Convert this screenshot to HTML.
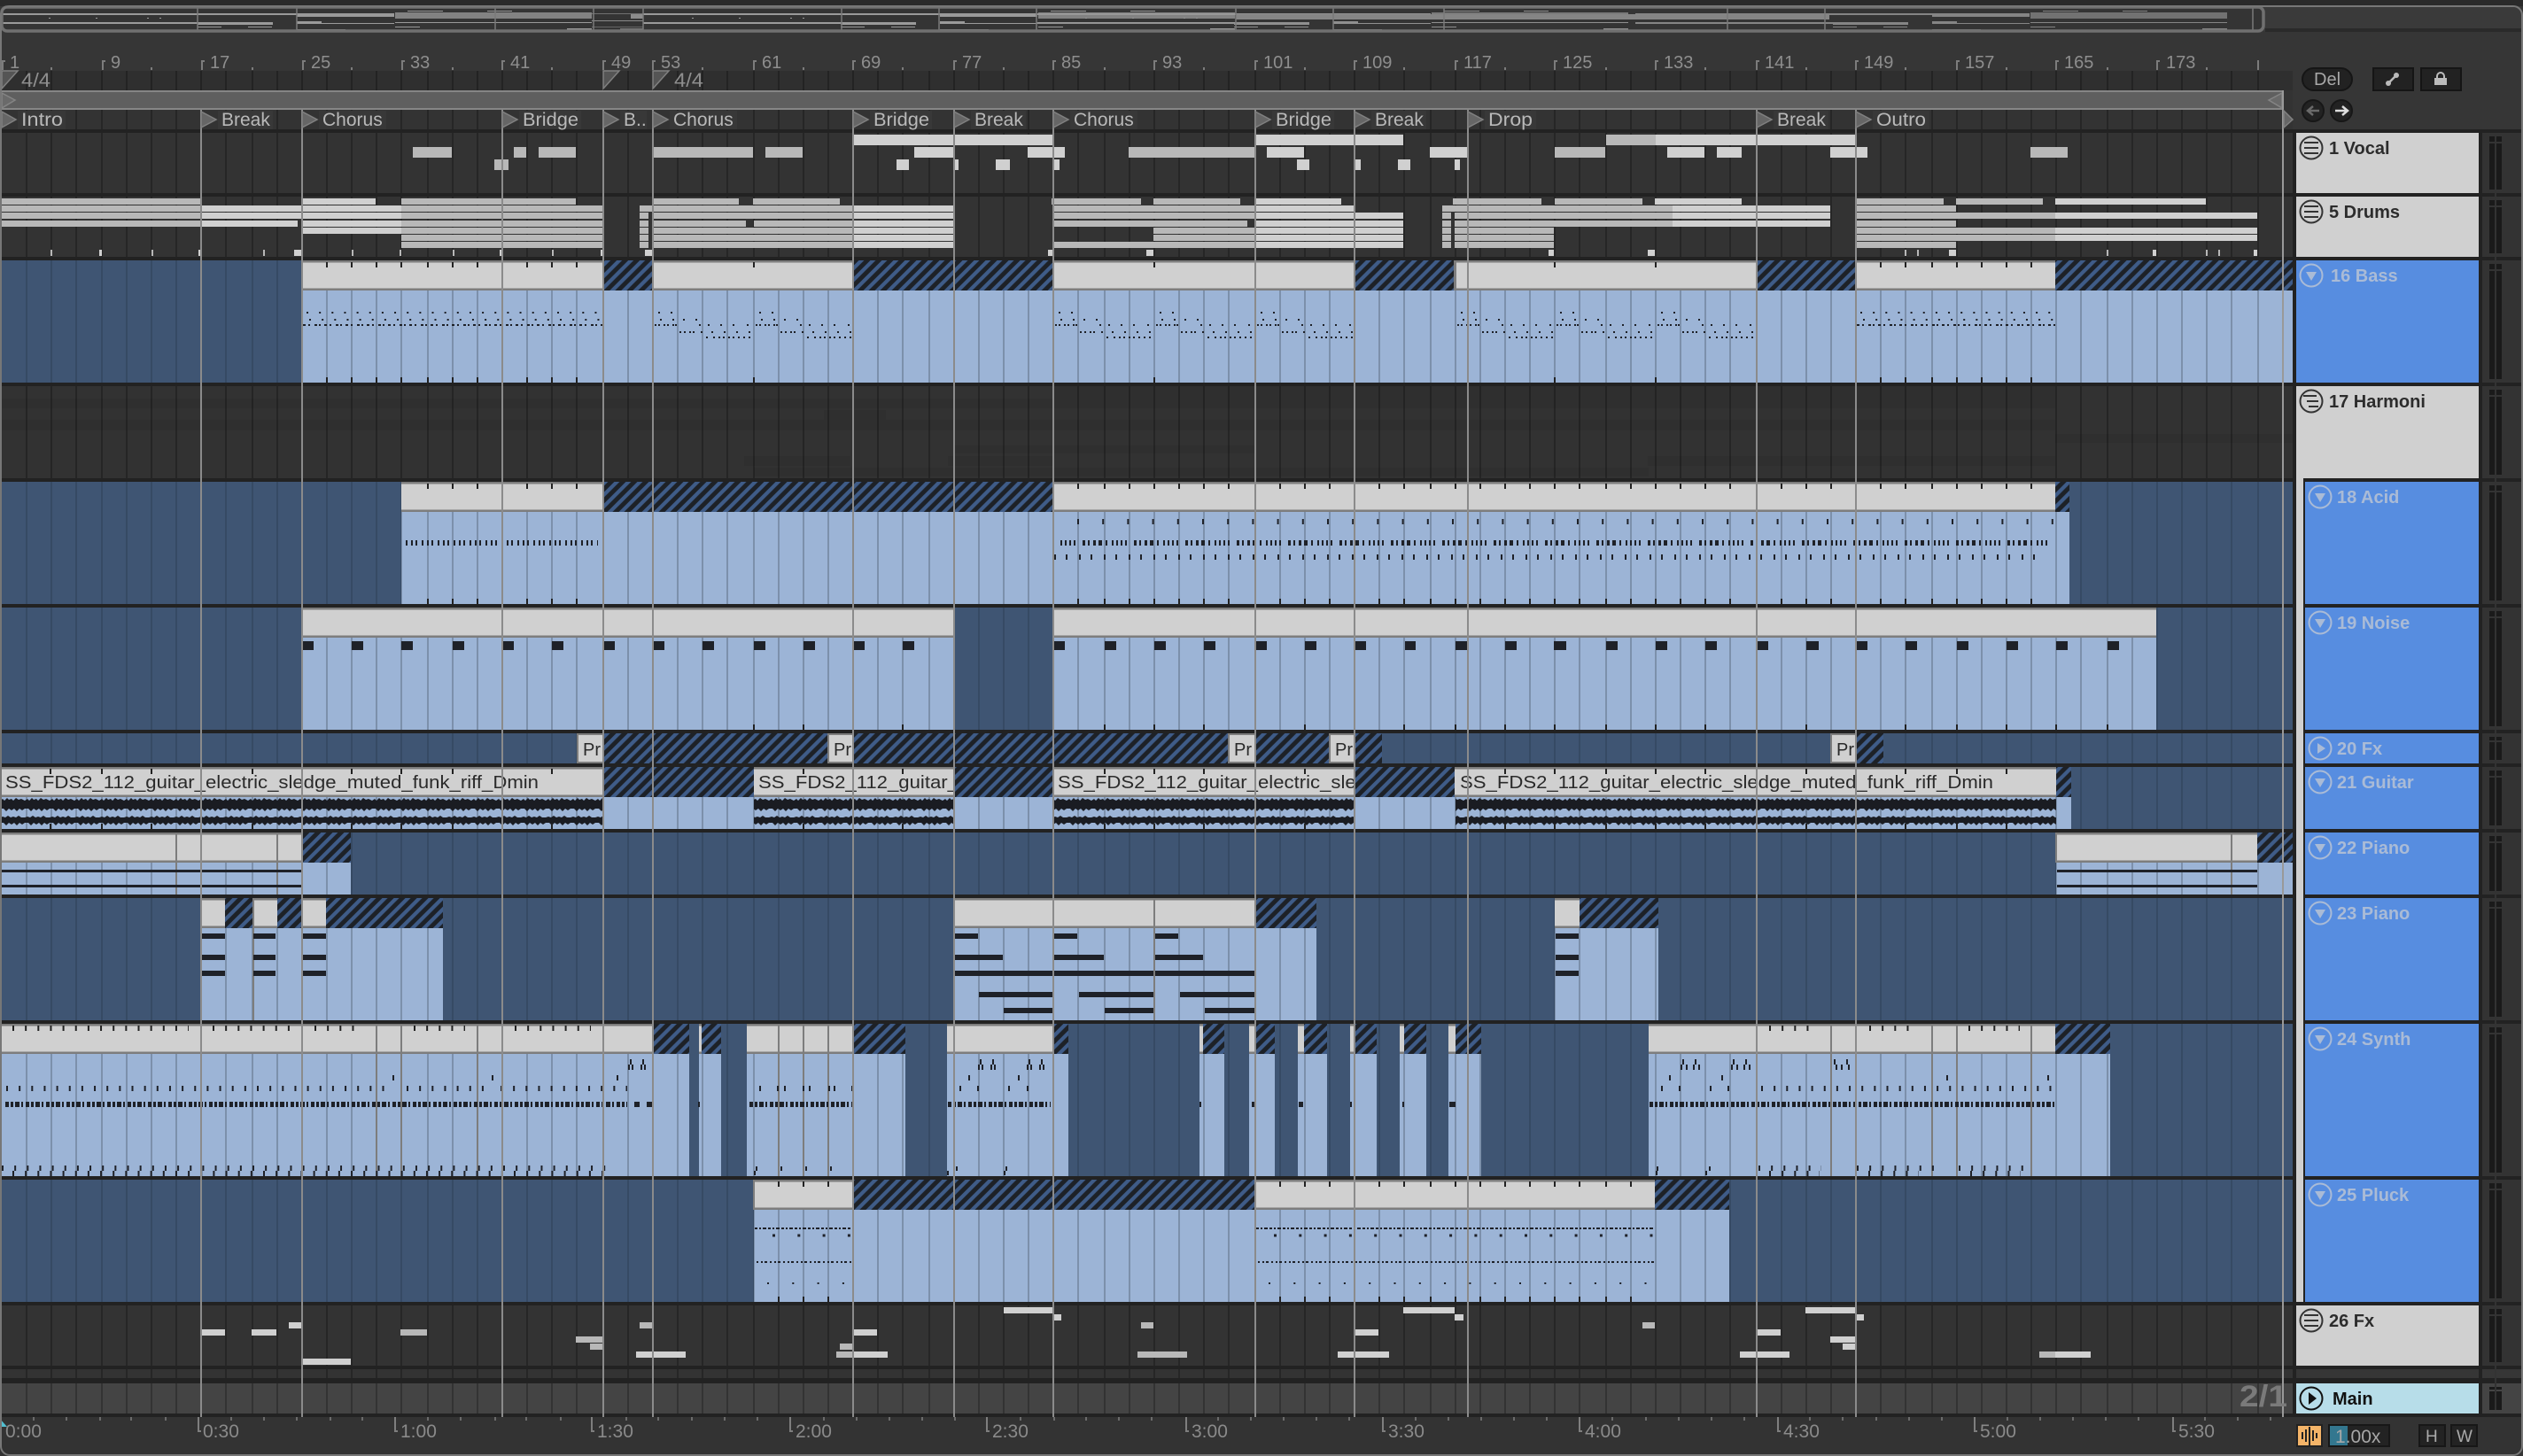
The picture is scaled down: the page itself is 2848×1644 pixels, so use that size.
<!DOCTYPE html>
<html><head><meta charset="utf-8"><title>Arrangement</title>
<style>
html,body{margin:0;padding:0;background:#363636;width:2848px;height:1644px;overflow:hidden}
svg{display:block}
text{font-family:"Liberation Sans",sans-serif}
.r{font-size:20px;fill:#8e8e8e}
.t{font-size:21px;fill:#8a8a8a}
.lo{font-size:21px;fill:#b9b9b9}
.c{font-size:20px;fill:#2a2a2a}
.hd{font-size:20px;font-weight:bold;fill:#2c2c2c}
.hb{font-size:20px;font-weight:bold;fill:#aabbd6}
.d{fill:#3f5573}.b{fill:#9cb4d6}.l{fill:url(#cl)}.h{fill:url(#ht)}
.s{fill:#222}
.v1{fill:#d0d0d0}.v2{fill:#b8b8b8}
.dr rect{height:7px}
.n{fill:#1e2128}
.ln{stroke:#1e2128;fill:none}
</style></head><body>
<svg xmlns="http://www.w3.org/2000/svg" width="2848" height="1644" viewBox="0 0 2848 1644">
<defs>
<linearGradient id="cl" x1="0" y1="0" x2="0" y2="1">
<stop offset="0" stop-color="#7d7d7d"/><stop offset=".07" stop-color="#7d7d7d"/><stop offset=".07" stop-color="#d0d0d0"/><stop offset=".92" stop-color="#d0d0d0"/><stop offset=".92" stop-color="#7d7d7d"/><stop offset="1" stop-color="#7d7d7d"/>
</linearGradient>
<pattern id="ht" patternUnits="userSpaceOnUse" width="9.2" height="9.2" patternTransform="rotate(45)">
<rect width="9.2" height="9.2" fill="#1d2127"/><rect x="1" width="4.2" height="9.2" fill="#3f5c88"/>
</pattern>
<pattern id="w1" patternUnits="userSpaceOnUse" x="0" y="901" width="28" height="15">
<path fill="#1a1c22" d="M0 3L3 1 5 3 8 0 10 2 13 1 15 3 18 0 21 2 24 1 28 3V12L25 14 22 12 19 15 16 12 13 14 10 12 7 15 4 12 0 12Z"/>
</pattern>
<pattern id="w2" patternUnits="userSpaceOnUse" x="0" y="921" width="28" height="11">
<path fill="#1a1c22" d="M0 2L3 1 6 2 9 0 12 2 15 1 18 2 21 0 24 2 28 2V8L25 10 22 8 19 11 16 8 13 10 10 8 7 11 4 8 0 8Z"/>
</pattern>
<path id="grid" d="M30 80V1596M58 80V1596M86 80V1596M115 80V1596M143 80V1596M171 80V1596M199 80V1596M227 80V1596M255 80V1596M285 80V1596M313 80V1596M341 80V1596M369 80V1596M397 80V1596M425 80V1596M453 80V1596M483 80V1596M511 80V1596M539 80V1596M567 80V1596M595 80V1596M623 80V1596M651 80V1596M681 80V1596M709 80V1596M737 80V1596M765 80V1596M793 80V1596M821 80V1596M851 80V1596M879 80V1596M907 80V1596M935 80V1596M963 80V1596M991 80V1596M1019 80V1596M1049 80V1596M1077 80V1596M1105 80V1596M1133 80V1596M1161 80V1596M1189 80V1596M1217 80V1596M1247 80V1596M1275 80V1596M1303 80V1596M1331 80V1596M1359 80V1596M1387 80V1596M1417 80V1596M1445 80V1596M1473 80V1596M1501 80V1596M1529 80V1596M1557 80V1596M1585 80V1596M1615 80V1596M1643 80V1596M1671 80V1596M1699 80V1596M1727 80V1596M1755 80V1596M1783 80V1596M1813 80V1596M1841 80V1596M1869 80V1596M1897 80V1596M1925 80V1596M1953 80V1596M1983 80V1596M2011 80V1596M2039 80V1596M2067 80V1596M2095 80V1596M2123 80V1596M2151 80V1596M2181 80V1596M2209 80V1596M2237 80V1596M2265 80V1596M2293 80V1596M2321 80V1596M2349 80V1596M2379 80V1596M2407 80V1596M2435 80V1596M2463 80V1596M2491 80V1596M2519 80V1596M2549 80V1596"/>
<clipPath id="bc">
<rect x="341" y="328" width="2247" height="104"/>
<rect x="453" y="578" width="1883" height="104"/>
<rect x="341" y="720" width="736" height="104"/><rect x="1189" y="720" width="1245" height="104"/>
<rect x="0" y="899" width="2338" height="37"/>
<rect x="0" y="973" width="396" height="37"/><rect x="2321" y="973" width="267" height="37"/>
<rect x="227" y="1048" width="273" height="104"/><rect x="1077" y="1048" width="409" height="104"/><rect x="1755" y="1048" width="117" height="104"/>
<rect x="0" y="1189" width="778" height="139"/><rect x="789" y="1189" width="25" height="139"/><rect x="843" y="1189" width="179" height="139"/><rect x="1069" y="1189" width="137" height="139"/><rect x="1354" y="1189" width="28" height="139"/><rect x="1410" y="1189" width="29" height="139"/><rect x="1465" y="1189" width="33" height="139"/><rect x="1524" y="1189" width="30" height="139"/><rect x="1580" y="1189" width="30" height="139"/><rect x="1635" y="1189" width="37" height="139"/><rect x="1861" y="1189" width="521" height="139"/>
<rect x="851" y="1366" width="1101" height="104"/>
</clipPath>
<clipPath id="dk"><rect x="0" y="80" width="2588" height="214"/><rect x="0" y="436" width="2588" height="108"/><rect x="0" y="1470" width="2588" height="130"/></clipPath>
<clipPath id="tk">
<rect x="360" y="296" width="300" height="6"/><rect x="360" y="426" width="300" height="6"/>
<rect x="850" y="296" width="2" height="6"/><rect x="850" y="426" width="2" height="6"/>
<rect x="1302" y="296" width="2" height="6"/><rect x="1302" y="426" width="2" height="6"/>
<rect x="1754" y="296" width="2" height="6"/><rect x="1754" y="426" width="2" height="6"/>
<rect x="1868" y="296" width="2" height="6"/><rect x="1868" y="426" width="2" height="6"/>
<rect x="2110" y="296" width="190" height="6"/><rect x="2110" y="426" width="190" height="6"/>
<rect x="470" y="546" width="200" height="6"/><rect x="470" y="676" width="200" height="6"/>
<rect x="1200" y="546" width="1110" height="6"/><rect x="1200" y="676" width="1110" height="6"/>
<rect x="870" y="1334" width="80" height="6"/><rect x="870" y="1464" width="80" height="6"/>
<rect x="1430" y="1334" width="420" height="6"/><rect x="1430" y="1464" width="420" height="6"/>
</clipPath>
<g id="bA" fill="#1e2128"><path d="M6 352h2v2h-2zM20 352h2v2h-2zM8 360h2v2h-2zM22 360h2v2h-2zM34 360h2v2h-2zM48 360h2v2h-2zM2 366h2v2h-2zM6 366h2v2h-2zM12 366h2v2h-2zM16 366h2v2h-2zM22 366h2v2h-2zM25 366h2v2h-2zM52 366h2v2h-2zM62 366h2v2h-2zM76 366h2v2h-2zM90 366h2v2h-2zM106 366h2v2h-2zM30 374h2v2h-2zM35 374h2v2h-2zM41 374h2v2h-2zM45 374h2v2h-2zM54 374h2v2h-2zM66 374h2v2h-2zM80 374h2v2h-2zM94 374h2v2h-2zM108 374h2v2h-2zM60 380h2v2h-2zM68 380h2v2h-2zM74 380h2v2h-2zM79 380h2v2h-2zM85 380h2v2h-2zM90 380h2v2h-2zM96 380h2v2h-2zM102 380h2v2h-2zM108 380h2v2h-2z"/></g>
<g id="ov" fill="#9a9a9a">
<rect x="0" y="15" width="223" height="2"/><rect x="0" y="25" width="223" height="2"/><rect x="55" y="20" width="2" height="1"/><rect x="108" y="20" width="2" height="1"/><rect x="166" y="20" width="2" height="1"/><rect x="180" y="20" width="2" height="1"/>
<rect x="223" y="15" width="112" height="2"/><rect x="223" y="25" width="85" height="3"/><rect x="223" y="30" width="27" height="1"/><rect x="280" y="30" width="27" height="1"/>
<rect x="335" y="15" width="110" height="4"/><rect x="335" y="24" width="28" height="3"/><rect x="335" y="33" width="55" height="1"/><rect x="335" y="26" width="110" height="1"/>
<rect x="446" y="14" width="222" height="7" fill="#828282"/><rect x="446" y="25" width="222" height="1"/><rect x="446" y="30" width="28" height="1"/><rect x="640" y="32" width="28" height="2"/><rect x="550" y="12" width="28" height="1"/><rect x="460" y="12" width="40" height="1"/>
</g>
</defs>

<rect width="2848" height="1644" fill="#363636"/>
<rect width="2848" height="7" fill="#2a2a2a"/>
<!-- overview -->
<rect x="2" y="8" width="2844" height="27" fill="#3a3a3a"/>
<rect x="2" y="8" width="2553" height="27" rx="6" fill="#343434"/>
<use href="#ov"/><use href="#ov" x="726"/><use href="#ov" x="1170" opacity=".9"/><use href="#ov" x="1846" opacity=".8"/>
<rect x="668" y="23" width="58" height="1" fill="#8a8a8a"/><rect x="668" y="15" width="58" height="1" fill="#707070"/><rect x="668" y="30" width="58" height="1" fill="#666"/><rect x="712" y="16" width="14" height="5" fill="#8c8c8c"/><rect x="700" y="32" width="26" height="2" fill="#777"/>
<rect x="1395" y="16" width="670" height="6" fill="#858585"/>
<path stroke="#7a7a7a" stroke-width="1.5" d="M223 9V34M335 9V34M559 9V34M670 9V34M726 9V34M950 9V34M1060 9V34M1170 9V34M1395 9V34M1505 9V34M1630 9V34M1950 9V34M2060 9V34M2543 9V34"/>
<rect x="2" y="8" width="2553" height="27" rx="6" fill="none" stroke="#707070" stroke-width="3.5"/>
<rect x="2557" y="32" width="289" height="4" fill="#2a2a2a"/>

<!-- arrangement base -->
<rect x="0" y="80" width="2588" height="22" fill="#2f2f2f"/>
<rect x="0" y="102" width="2588" height="1494" fill="#333"/>
<rect x="0" y="1562" width="2588" height="34" fill="#444"/>
<rect x="0" y="436" width="2588" height="104" fill="#323232"/>
<!-- harmoni shading -->
<g fill="#000" opacity=".05"><rect x="1189" y="436" width="1131" height="14"/><rect x="0" y="450" width="2320" height="11"/><rect x="930" y="463" width="70" height="11"/><rect x="0" y="474" width="2320" height="12"/><rect x="1077" y="503" width="340" height="9"/><rect x="2320" y="490" width="268" height="10"/><rect x="840" y="515" width="120" height="11"/><rect x="1070" y="515" width="120" height="11"/><rect x="1860" y="515" width="460" height="11"/><rect x="851" y="528" width="1010" height="10"/></g>

<!-- deep blue rows -->
<g class="d"><rect x="0" y="294" width="2588" height="138"/><rect x="0" y="544" width="2588" height="138"/><rect x="0" y="686" width="2588" height="138"/><rect x="0" y="828" width="2588" height="34"/><rect x="0" y="866" width="2588" height="70"/><rect x="0" y="940" width="2588" height="70"/><rect x="0" y="1014" width="2588" height="138"/><rect x="0" y="1156" width="2588" height="172"/><rect x="0" y="1332" width="2588" height="138"/></g>

<!-- grid base (faint on deep blue) -->
<use href="#grid" stroke="#000" stroke-opacity=".13" stroke-width="2"/>
<g clip-path="url(#dk)"><use href="#grid" stroke="#000" stroke-opacity=".12" stroke-width="2"/></g>

<!-- clip bodies -->
<g class="b">
<rect x="341" y="328" width="2247" height="104"/>
<rect x="453" y="578" width="1883" height="104"/>
<rect x="341" y="720" width="736" height="104"/><rect x="1189" y="720" width="1245" height="104"/>
<rect x="0" y="899" width="2338" height="37"/>
<rect x="0" y="973" width="396" height="37"/><rect x="2321" y="973" width="267" height="37"/>
<rect x="227" y="1048" width="273" height="104"/><rect x="1077" y="1048" width="409" height="104"/><rect x="1755" y="1048" width="117" height="104"/>
<rect x="0" y="1189" width="778" height="139"/><rect x="789" y="1189" width="25" height="139"/><rect x="843" y="1189" width="179" height="139"/><rect x="1069" y="1189" width="137" height="139"/><rect x="1354" y="1189" width="28" height="139"/><rect x="1410" y="1189" width="29" height="139"/><rect x="1465" y="1189" width="33" height="139"/><rect x="1524" y="1189" width="30" height="139"/><rect x="1580" y="1189" width="30" height="139"/><rect x="1635" y="1189" width="37" height="139"/><rect x="1861" y="1189" width="521" height="139"/>
<rect x="851" y="1366" width="1101" height="104"/>
</g>
<!-- grid on clip bodies -->
<g clip-path="url(#bc)"><use href="#grid" stroke="#000" stroke-opacity=".2" stroke-width="2"/></g>

<!-- separators -->
<g class="s"><rect y="146" width="2846" height="4"/><rect y="218" width="2846" height="4"/><rect y="290" width="2846" height="4"/><rect y="432" width="2846" height="4"/><rect y="540" width="2846" height="4"/><rect y="682" width="2846" height="4"/><rect y="824" width="2846" height="4"/><rect y="862" width="2846" height="4"/><rect y="936" width="2846" height="4"/><rect y="1010" width="2846" height="4"/><rect y="1152" width="2846" height="4"/><rect y="1328" width="2846" height="4"/><rect y="1470" width="2846" height="4"/><rect y="1542" width="2846" height="4"/><rect y="1556" width="2846" height="6"/><rect y="1596" width="2846" height="4"/></g>

<!-- vocal notes -->
<g class="v1"><rect x="963" y="152" width="226" height="12"/><rect x="1418" y="152" width="166" height="12"/><rect x="1869" y="152" width="226" height="12"/>
<rect x="1032" y="166" width="45" height="12"/><rect x="1160" y="166" width="42" height="12"/><rect x="1430" y="166" width="42" height="12"/><rect x="1614" y="166" width="42" height="12"/><rect x="1882" y="166" width="42" height="12"/><rect x="1938" y="166" width="28" height="12"/><rect x="2066" y="166" width="42" height="12"/>
<rect x="1012" y="180" width="14" height="12"/><rect x="1078" y="180" width="4" height="12"/><rect x="1124" y="180" width="16" height="12"/><rect x="1190" y="180" width="6" height="12"/><rect x="1464" y="180" width="14" height="12"/><rect x="1530" y="180" width="6" height="12"/><rect x="1578" y="180" width="14" height="12"/><rect x="1642" y="180" width="6" height="12"/></g>
<g class="v2"><rect x="1813" y="152" width="56" height="12"/>
<rect x="466" y="166" width="44" height="12"/><rect x="580" y="166" width="14" height="12"/><rect x="608" y="166" width="42" height="12"/><rect x="737" y="166" width="113" height="12"/><rect x="864" y="166" width="42" height="12"/><rect x="1274" y="166" width="142" height="12"/><rect x="1755" y="166" width="57" height="12"/><rect x="2292" y="166" width="42" height="12"/>
<rect x="558" y="180" width="16" height="12"/></g>

<!-- drums -->
<g class="v2 dr">
<rect x="2" y="224" width="225" height="6"/><rect x="453" y="224" width="197" height="6"/><rect x="737" y="224" width="97" height="6"/><rect x="850" y="224" width="98" height="6"/><rect x="1187" y="224" width="101" height="6"/><rect x="1302" y="224" width="98" height="6"/><rect x="1640" y="224" width="100" height="6"/><rect x="1755" y="224" width="99" height="6"/><rect x="2095" y="224" width="99" height="6"/><rect x="2208" y="224" width="98" height="6"/>
<rect x="2" y="232" width="225" height="6"/><rect x="453" y="232" width="228" height="6"/><rect x="722" y="232" width="241" height="6"/><rect x="1189" y="232" width="228" height="6"/><rect x="1628" y="232" width="260" height="6"/><rect x="2095" y="232" width="113" height="6"/>
<rect x="2" y="240" width="225" height="6"/><rect x="453" y="240" width="228" height="6"/><rect x="737" y="240" width="226" height="6"/><rect x="1189" y="240" width="228" height="6"/><rect x="1642" y="240" width="246" height="6"/><rect x="2095" y="240" width="225" height="6"/>
<rect x="2" y="249" width="225" height="6"/><rect x="453" y="249" width="228" height="6"/><rect x="737" y="249" width="105" height="6"/><rect x="851" y="249" width="112" height="6"/><rect x="1189" y="249" width="219" height="6"/><rect x="1642" y="249" width="246" height="6"/><rect x="2095" y="249" width="113" height="6"/>
<rect x="453" y="257" width="228" height="6"/><rect x="737" y="257" width="226" height="6"/><rect x="1302" y="257" width="115" height="6"/><rect x="1642" y="257" width="112" height="6"/><rect x="2095" y="257" width="225" height="6"/>
<rect x="453" y="265" width="228" height="6"/><rect x="737" y="265" width="226" height="6"/><rect x="1302" y="265" width="115" height="6"/><rect x="1642" y="265" width="112" height="6"/><rect x="2095" y="265" width="225" height="6"/>
<rect x="453" y="273" width="228" height="6"/><rect x="737" y="273" width="226" height="6"/><rect x="1189" y="273" width="228" height="6"/><rect x="1642" y="273" width="112" height="6"/><rect x="2095" y="273" width="113" height="6"/>
<rect x="722" y="240" width="10" height="6"/><rect x="722" y="249" width="10" height="6"/><rect x="722" y="257" width="10" height="6"/><rect x="722" y="265" width="10" height="6"/><rect x="722" y="273" width="10" height="6"/>
<rect x="1628" y="240" width="10" height="6"/><rect x="1628" y="249" width="10" height="6"/><rect x="1628" y="257" width="10" height="6"/><rect x="1628" y="265" width="10" height="6"/><rect x="1628" y="273" width="10" height="6"/>
<rect x="57" y="282" width="2" height="6"/><rect x="171" y="282" width="2" height="6"/><rect x="297" y="282" width="2" height="6"/><rect x="397" y="282" width="2" height="6"/><rect x="451" y="282" width="2" height="6"/><rect x="511" y="282" width="2" height="6"/><rect x="623" y="282" width="2" height="6"/><rect x="2150" y="282" width="2" height="6"/><rect x="2164" y="282" width="2" height="6"/><rect x="2378" y="282" width="2" height="6"/><rect x="2490" y="282" width="2" height="6"/><rect x="2504" y="282" width="2" height="6"/>
</g>
<g class="v1 dr">
<rect x="341" y="224" width="83" height="6"/><rect x="1418" y="224" width="96" height="6"/><rect x="1868" y="224" width="98" height="6"/><rect x="2320" y="224" width="170" height="6"/>
<rect x="227" y="232" width="226" height="6"/><rect x="963" y="232" width="113" height="6"/><rect x="1417" y="232" width="111" height="6"/><rect x="1888" y="232" width="178" height="6"/>
<rect x="227" y="240" width="226" height="6"/><rect x="963" y="240" width="113" height="6"/><rect x="1417" y="240" width="167" height="6"/><rect x="1888" y="240" width="178" height="6"/><rect x="2320" y="240" width="228" height="6"/>
<rect x="227" y="249" width="109" height="6"/><rect x="341" y="249" width="112" height="6"/><rect x="963" y="249" width="113" height="6"/><rect x="1417" y="249" width="167" height="6"/><rect x="1888" y="249" width="178" height="6"/>
<rect x="341" y="257" width="112" height="6"/><rect x="963" y="257" width="113" height="6"/><rect x="1417" y="257" width="167" height="6"/><rect x="2320" y="257" width="228" height="6"/>
<rect x="963" y="265" width="113" height="6"/><rect x="1417" y="265" width="167" height="6"/><rect x="2320" y="265" width="228" height="6"/>
<rect x="963" y="273" width="113" height="6"/><rect x="1417" y="273" width="167" height="6"/>
<rect x="112" y="282" width="3" height="6"/><rect x="224" y="282" width="4" height="6"/><rect x="332" y="282" width="8" height="6"/><rect x="564" y="282" width="4" height="6"/><rect x="678" y="282" width="4" height="6"/><rect x="728" y="282" width="9" height="6"/><rect x="1183" y="282" width="5" height="6"/><rect x="1294" y="282" width="8" height="6"/><rect x="1748" y="282" width="6" height="6"/><rect x="1860" y="282" width="8" height="6"/><rect x="2200" y="282" width="8" height="6"/><rect x="2430" y="282" width="4" height="6"/><rect x="2544" y="282" width="4" height="6"/>
</g>

<!-- clip headers -->
<g class="l">
<rect x="341" y="294" width="340" height="34"/><rect x="737" y="294" width="226" height="34"/><rect x="1189" y="294" width="340" height="34"/><rect x="1642" y="294" width="341" height="34"/><rect x="2095" y="294" width="225" height="34"/>
<rect x="453" y="544" width="228" height="34"/><rect x="1189" y="544" width="1131" height="34"/>
<rect x="341" y="686" width="736" height="34"/><rect x="1189" y="686" width="1245" height="34"/>
<rect x="0" y="866" width="681" height="34"/><rect x="851" y="866" width="226" height="34"/><rect x="1189" y="866" width="340" height="34"/><rect x="1642" y="866" width="679" height="34"/>
<rect x="0" y="940" width="341" height="34"/><rect x="2321" y="940" width="227" height="34"/>
<rect x="227" y="1014" width="27" height="34"/><rect x="286" y="1014" width="27" height="34"/><rect x="341" y="1014" width="27" height="34"/><rect x="1077" y="1014" width="340" height="34"/><rect x="1755" y="1014" width="28" height="34"/>
<rect x="0" y="1156" width="737" height="34"/><rect x="789" y="1156" width="3" height="34"/><rect x="843" y="1156" width="120" height="34"/><rect x="1069" y="1156" width="120" height="34"/><rect x="1354" y="1156" width="4" height="34"/><rect x="1410" y="1156" width="7" height="34"/><rect x="1465" y="1156" width="7" height="34"/><rect x="1524" y="1156" width="5" height="34"/><rect x="1580" y="1156" width="5" height="34"/><rect x="1635" y="1156" width="8" height="34"/><rect x="1861" y="1156" width="459" height="34"/>
<rect x="851" y="1332" width="112" height="34"/><rect x="1417" y="1332" width="451" height="34"/>
</g>
<g class="h">
<rect x="681" y="294" width="56" height="34"/><rect x="963" y="294" width="226" height="34"/><rect x="1529" y="294" width="113" height="34"/><rect x="1983" y="294" width="112" height="34"/><rect x="2320" y="294" width="268" height="34"/>
<rect x="681" y="544" width="508" height="34"/><rect x="2320" y="544" width="16" height="34"/>
<rect x="681" y="828" width="253" height="34"/><rect x="963" y="828" width="423" height="34"/><rect x="1417" y="828" width="83" height="34"/><rect x="1529" y="828" width="31" height="34"/><rect x="2095" y="828" width="31" height="34"/>
<rect x="681" y="866" width="170" height="34"/><rect x="1077" y="866" width="112" height="34"/><rect x="1529" y="866" width="113" height="34"/><rect x="2321" y="866" width="17" height="34"/>
<rect x="341" y="940" width="55" height="34"/><rect x="2548" y="940" width="40" height="34"/>
<rect x="254" y="1014" width="32" height="34"/><rect x="313" y="1014" width="28" height="34"/><rect x="368" y="1014" width="132" height="34"/><rect x="1417" y="1014" width="69" height="34"/><rect x="1783" y="1014" width="89" height="34"/>
<rect x="737" y="1156" width="41" height="34"/><rect x="792" y="1156" width="22" height="34"/><rect x="963" y="1156" width="59" height="34"/><rect x="1189" y="1156" width="17" height="34"/><rect x="1358" y="1156" width="24" height="34"/><rect x="1417" y="1156" width="22" height="34"/><rect x="1472" y="1156" width="26" height="34"/><rect x="1529" y="1156" width="25" height="34"/><rect x="1585" y="1156" width="25" height="34"/><rect x="1643" y="1156" width="29" height="34"/><rect x="2320" y="1156" width="62" height="34"/>
<rect x="963" y="1332" width="454" height="34"/><rect x="1868" y="1332" width="84" height="34"/>
</g>

<!-- Pr clips -->
<g fill="#d0d0d0" stroke="#7d7d7d" stroke-width="2"><rect x="652" y="829" width="29" height="32"/><rect x="935" y="829" width="28" height="32"/><rect x="1387" y="829" width="30" height="32"/><rect x="1501" y="829" width="28" height="32"/><rect x="2067" y="829" width="28" height="32"/></g>
<text class="c" x="658" y="853">Pr</text><text class="c" x="941" y="853">Pr</text><text class="c" x="1393" y="853">Pr</text><text class="c" x="1507" y="853">Pr</text><text class="c" x="2073" y="853">Pr</text>

<!-- clip dividers -->
<g fill="#7d7d7d"><rect x="198" y="940" width="2" height="70"/><rect x="312" y="940" width="2" height="70"/><rect x="2518" y="940" width="2" height="70"/><rect x="1302" y="1014" width="2" height="138"/><rect x="285" y="1014" width="2" height="138"/><rect x="424" y="1156" width="2" height="172"/><rect x="452" y="1156" width="2" height="172"/><rect x="538" y="1156" width="2" height="172"/><rect x="878" y="1156" width="2" height="172"/><rect x="906" y="1156" width="2" height="172"/><rect x="934" y="1156" width="2" height="172"/><rect x="2066" y="1156" width="2" height="172"/><rect x="2180" y="1156" width="2" height="172"/><rect x="2208" y="1156" width="2" height="172"/><rect x="2292" y="1156" width="2" height="172"/><rect x="850" y="1332" width="2" height="34"/><rect x="1641" y="294" width="3" height="34"/><rect x="2320" y="940" width="2" height="34"/></g>

<!-- guitar labels -->
<svg x="0" y="866" width="681" height="34"><text class="c" x="6" y="24" textLength="602" lengthAdjust="spacingAndGlyphs">SS_FDS2_112_guitar_electric_sledge_muted_funk_riff_Dmin</text></svg>
<svg x="851" y="866" width="226" height="34"><text class="c" x="5" y="24" textLength="602" lengthAdjust="spacingAndGlyphs">SS_FDS2_112_guitar_electric_sledge_muted_funk_riff_Dmin</text></svg>
<svg x="1189" y="866" width="340" height="34"><text class="c" x="5" y="24" textLength="602" lengthAdjust="spacingAndGlyphs">SS_FDS2_112_guitar_electric_sledge_muted_funk_riff_Dmin</text></svg>
<svg x="1642" y="866" width="679" height="34"><text class="c" x="6" y="24" textLength="602" lengthAdjust="spacingAndGlyphs">SS_FDS2_112_guitar_electric_sledge_muted_funk_riff_Dmin</text></svg>

<!-- waveforms -->
<g fill="url(#w1)"><rect x="2" y="901" width="679" height="15"/><rect x="851" y="901" width="226" height="15"/><rect x="1189" y="901" width="340" height="15"/><rect x="1643" y="901" width="678" height="15"/></g>
<g fill="url(#w2)"><rect x="2" y="921" width="679" height="11"/><rect x="851" y="921" width="226" height="11"/><rect x="1189" y="921" width="340" height="11"/><rect x="1643" y="921" width="678" height="11"/></g>

<!-- ticks by grid -->
<g clip-path="url(#tk)"><use href="#grid" stroke="#222" stroke-width="2"/></g>
<path stroke="#222" stroke-width="2" d="M851 818v6M907 818v6M1019 818v6M1247 818v6M1303 818v6M1359 818v6M1473 818v6M1585 818v6M1643 818v6M1699 818v6M1755 818v6M1813 818v6M1869 818v6M1925 818v6M2039 818v6M2095 818v6M2151 818v6M2209 818v6M2265 818v6M2321 818v6M2379 818v6
M57 868v6M115 868v6M171 868v6M285 868v6M397 868v6M453 868v6M511 868v6M623 868v6M907 868v6M1019 868v6M1247 868v6M1303 868v6M1359 868v6M1473 868v6M1699 868v6M1755 868v6M1813 868v6M1869 868v6M1925 868v6M2039 868v6M2095 868v6M2151 868v6M2209 868v6M2265 868v6
M57 930v6M115 930v6M171 930v6M285 930v6M397 930v6M453 930v6M511 930v6M623 930v6M907 930v6M1019 930v6M1247 930v6M1303 930v6M1359 930v6M1473 930v6M1699 930v6M1755 930v6M1813 930v6M1869 930v6M1925 930v6M2039 930v6M2095 930v6M2151 930v6M2209 930v6M2265 930v6"/>

<!-- bass notes -->
<g class="ln" stroke-width="2">
<path stroke-dasharray="2 12.15" d="M346 353H681"/><path stroke-dasharray="2 12.15" d="M349 361H681"/><path stroke-dasharray="3 3 2 5 3 2 2 4" d="M342 367H681"/>
<path stroke-dasharray="2 12.15" d="M2100 353H2318"/><path stroke-dasharray="2 12.15" d="M2103 361H2318"/><path stroke-dasharray="3 3 2 5 3 2 2 4" d="M2096 367H2320"/>
</g>
<use href="#bA" x="737"/><use href="#bA" x="851"/><use href="#bA" x="1189"/><use href="#bA" x="1303"/><use href="#bA" x="1417"/><use href="#bA" x="1643"/><use href="#bA" x="1755"/><use href="#bA" x="1869"/>

<!-- acid notes -->
<g class="ln" stroke-width="6">
<path stroke-dasharray="2 26.2" d="M1216 589H2320"/>
<path stroke-dasharray="2 3 2 3 2 3 2 8 3 3 2 4 3 3 4 4 2 5" d="M1197 613H2312"/>
<path stroke-dasharray="2 11 2 13" d="M1190 629H2305"/>
<path stroke-dasharray="2 4 2 3 2 5" d="M458 613H675"/>
</g>

<!-- noise notes -->
<path class="n" d="M341 724h13v10h-13zM397 724h13v10h-13zM453 724h13v10h-13zM511 724h13v10h-13zM567 724h13v10h-13zM623 724h13v10h-13zM681 724h13v10h-13zM737 724h13v10h-13zM793 724h13v10h-13zM851 724h13v10h-13zM907 724h13v10h-13zM963 724h13v10h-13zM1019 724h13v10h-13zM1190 724h12v10h-12zM1247 724h13v10h-13zM1303 724h13v10h-13zM1359 724h13v10h-13zM1418 724h12v10h-12zM1473 724h13v10h-13zM1530 724h12v10h-12zM1586 724h12v10h-12zM1643 724h13v10h-13zM1699 724h13v10h-13zM1754 724h14v10h-14zM1813 724h13v10h-13zM1869 724h13v10h-13zM1925 724h13v10h-13zM1983 724h13v10h-13zM2039 724h14v10h-14zM2095 724h13v10h-13zM2151 724h13v10h-13zM2209 724h13v10h-13zM2265 724h13v10h-13zM2321 724h13v10h-13zM2379 724h13v10h-13z"/>

<!-- piano 22 -->
<g class="n"><rect x="2" y="982" width="339" height="3"/><rect x="2" y="999" width="339" height="3"/><rect x="2322" y="982" width="226" height="3"/><rect x="2322" y="999" width="226" height="3"/></g>

<!-- piano 23 -->
<path class="n" d="M228 1054h26v6h-26zM228 1078h26v6h-26zM228 1096h26v6h-26zM286 1054h25v6h-25zM286 1078h25v6h-25zM286 1096h25v6h-25zM341 1054h27v6h-27zM341 1078h27v6h-27zM341 1096h27v6h-27z
M1078 1054h26v6h-26zM1190 1054h26v6h-26zM1304 1054h26v6h-26zM1078 1078h54v6h-54zM1190 1078h56v6h-56zM1304 1078h54v6h-54zM1078 1096h110v6h-110zM1190 1096h112v6h-112zM1304 1096h112v6h-112zM1105 1120h83v6h-83zM1218 1120h84v6h-84zM1332 1120h84v6h-84zM1133 1138h55v6h-55zM1247 1138h55v6h-55zM1360 1138h56v6h-56z
M1756 1054h26v6h-26zM1756 1078h26v6h-26zM1756 1096h26v6h-26z"/>

<!-- synth notes -->
<g class="ln" stroke-width="6">
<path stroke="#222" stroke-dasharray="2 12.15" d="M14 1161H213M240 1161H327M355 1161H411M467 1161H525M581 1161H667M1997 1161H2053M2110 1161H2166M2222 1161H2280"/>
<path stroke-dasharray="2 12.15" d="M7 1229H434M459 1229H546M565 1229H708M1988 1229H2320"/>
<path stroke-dasharray="2 12.15" d="M2 1319H690M1985 1319H2056M2096 1319H2184M2211 1319H2295"/>
<path stroke-dasharray="2 12.15" d="M14 1325H680M1997 1325H2054M2109 1325H2166M2224 1325H2281"/>
<path stroke-dasharray="4 2 3 2 5 2 2 3" d="M6 1247H708M846 1247H962M1070 1247H1186M1862 1247H2320"/>
</g>
<path class="n" d="M716 1244h6v6h-6zM730 1244h6v6h-6zM788 1244h2v6h-2zM1354 1244h2v6h-2zM1413 1244h3v6h-3zM1466 1244h5v6h-5zM1524 1244h2v6h-2zM1583 1244h2v6h-2zM1636 1244h7v6h-7z
M443 1214h2v6h-2zM555 1214h2v6h-2zM696 1214h2v6h-2zM1093 1214h2v6h-2zM1149 1214h2v6h-2zM1884 1214h2v6h-2zM1943 1214h2v6h-2zM2197 1214h2v6h-2zM2311 1214h2v6h-2z
M857 1226h2v6h-2zM877 1226h2v6h-2zM885 1226h2v6h-2zM906 1226h2v6h-2zM913 1226h2v6h-2zM935 1226h2v6h-2zM941 1226h2v6h-2zM961 1226h2v6h-2zM1083 1226h2v6h-2zM1103 1226h2v6h-2zM1138 1226h2v6h-2zM1159 1226h2v6h-2zM1875 1226h2v6h-2zM1895 1226h2v6h-2zM1930 1226h2v6h-2zM1950 1226h2v6h-2z
M711 1196h2v6h-2zM725 1196h2v6h-2zM709 1202h2v6h-2zM713 1202h2v6h-2zM723 1202h2v6h-2zM727 1202h2v6h-2z
M1106 1196h2v6h-2zM1120 1196h2v6h-2zM1104 1202h2v6h-2zM1108 1202h2v6h-2zM1118 1202h2v6h-2zM1122 1202h2v6h-2zM1161 1196h2v6h-2zM1175 1196h2v6h-2zM1159 1202h2v6h-2zM1163 1202h2v6h-2zM1173 1202h2v6h-2zM1177 1202h2v6h-2z
M1899 1196h2v6h-2zM1913 1196h2v6h-2zM1897 1202h2v6h-2zM1903 1202h2v6h-2zM1911 1202h2v6h-2zM1917 1202h2v6h-2zM1956 1196h2v6h-2zM1970 1196h2v6h-2zM1954 1202h2v6h-2zM1960 1202h2v6h-2zM1968 1202h2v6h-2zM1974 1202h2v6h-2zM2070 1196h2v6h-2zM2084 1196h2v6h-2zM2072 1202h2v6h-2zM2078 1202h2v6h-2zM2086 1202h2v6h-2z
M853 1317h2v5h-2zM881 1317h2v5h-2zM909 1317h2v5h-2zM937 1317h2v5h-2zM851 1322h2v5h-2zM1079 1317h2v5h-2zM1135 1317h2v5h-2zM1133 1322h2v5h-2zM1069 1322h2v5h-2zM1870 1317h2v5h-2zM1929 1317h2v5h-2zM1869 1322h2v5h-2zM1925 1322h2v5h-2z"/>

<!-- pluck notes -->
<g class="ln" stroke-width="2">
<path stroke-dasharray="3 2 2 2 4 2" d="M852 1387H963M1418 1387H1868"/>
<path stroke-dasharray="2 3 2 2 3 3" d="M854 1425H963M1420 1425H1868"/>
<path stroke-dasharray="2 26.3" d="M866 1449H960M1432 1449H1868"/>
<path stroke-width="3" stroke-dasharray="3 25.3" d="M872 1395H963M1438 1395H1868"/>
</g>

<!-- fx notes -->
<g class="v1"><rect x="1133" y="1476" width="55" height="7"/><rect x="1584" y="1476" width="58" height="7"/><rect x="2038" y="1476" width="56" height="7"/>
<rect x="1189" y="1484" width="9" height="7"/><rect x="1642" y="1484" width="10" height="7"/><rect x="2095" y="1484" width="9" height="7"/>
<rect x="326" y="1493" width="14" height="7"/>
<rect x="228" y="1501" width="26" height="7"/><rect x="284" y="1501" width="28" height="7"/><rect x="963" y="1501" width="27" height="7"/><rect x="1530" y="1501" width="26" height="7"/><rect x="1984" y="1501" width="26" height="7"/>
<rect x="2066" y="1509" width="28" height="7"/><rect x="2080" y="1517" width="14" height="7"/>
<rect x="718" y="1526" width="56" height="7"/><rect x="963" y="1526" width="39" height="7"/><rect x="1510" y="1526" width="58" height="7"/><rect x="1964" y="1526" width="56" height="7"/><rect x="2320" y="1526" width="40" height="7"/>
<rect x="342" y="1534" width="54" height="7"/></g>
<g class="v2"><rect x="722" y="1493" width="14" height="7"/><rect x="1288" y="1493" width="14" height="7"/><rect x="1854" y="1493" width="14" height="7"/>
<rect x="452" y="1501" width="30" height="7"/><rect x="650" y="1509" width="30" height="7"/><rect x="666" y="1517" width="14" height="7"/><rect x="948" y="1517" width="15" height="7"/>
<rect x="944" y="1526" width="19" height="7"/><rect x="1284" y="1526" width="56" height="7"/><rect x="2302" y="1526" width="18" height="7"/></g>

<!-- ruler ticks -->
<path fill="none" stroke="#7c7c7c" stroke-width="2" d="M3 79V69h3M116 79V69h3M228 79V69h3M342 79V69h3M454 79V69h3M567 79V69h3M681 79V69h3M737 79V69h3M851 79V69h3M963 79V69h3M1077 79V69h3M1189 79V69h3M1303 79V69h3M1417 79V69h3M1529 79V69h3M1643 79V69h3M1755 79V69h3M1869 79V69h3M1983 79V69h3M2095 79V69h3M2209 79V69h3M2321 79V69h3M2435 79V69h3"/>
<path stroke="#7c7c7c" stroke-width="2" d="M58 76v3M171 76v3M285 76v3M397 76v3M511 76v3M623 76v3M793 76v3M907 76v3M1019 76v3M1133 76v3M1247 76v3M1359 76v3M1473 76v3M1585 76v3M1699 76v3M1813 76v3M1925 76v3M2039 76v3M2151 76v3M2265 76v3M2379 76v3M2491 76v3M2549 68v11"/>
<g class="r"><text x="11" y="77">1</text><text x="125" y="77">9</text><text x="237" y="77">17</text><text x="351" y="77">25</text><text x="463" y="77">33</text><text x="576" y="77">41</text><text x="690" y="77">49</text><text x="746" y="77">53</text><text x="860" y="77">61</text><text x="972" y="77">69</text><text x="1086" y="77">77</text><text x="1198" y="77">85</text><text x="1312" y="77">93</text><text x="1426" y="77">101</text><text x="1538" y="77">109</text><text x="1652" y="77">117</text><text x="1764" y="77">125</text><text x="1878" y="77">133</text><text x="1992" y="77">141</text><text x="2104" y="77">149</text><text x="2218" y="77">157</text><text x="2330" y="77">165</text><text x="2445" y="77">173</text>
<text x="24" y="98" font-size="22" textLength="33" lengthAdjust="spacingAndGlyphs">4/4</text><text x="761" y="98" font-size="22" textLength="33" lengthAdjust="spacingAndGlyphs">4/4</text></g>
<g fill="#555" stroke="#808080" stroke-width="1.5"><path d="M2 80H20L2 100Z"/><path d="M681 80H699L681 100Z"/><path d="M737 80H755L737 100Z"/></g>

<!-- loop brace -->
<rect x="1" y="103" width="2576" height="20" fill="#5f5f5f" stroke="#868686" stroke-width="2"/>
<path d="M2 105L17 113 2 122Z" fill="#6a6a6a" stroke="#848484" stroke-width="1.5"/>
<path d="M2576 105L2561 113 2576 122Z" fill="#6a6a6a" stroke="#848484" stroke-width="1.5"/>

<!-- locator labels bg -->
<g fill="#383838"><rect x="20" y="125" width="54" height="21"/><rect x="246" y="125" width="62" height="21"/><rect x="360" y="125" width="76" height="21"/><rect x="586" y="125" width="70" height="21"/><rect x="700" y="125" width="30" height="21"/><rect x="756" y="125" width="76" height="21"/><rect x="982" y="125" width="70" height="21"/><rect x="1096" y="125" width="62" height="21"/><rect x="1208" y="125" width="76" height="21"/><rect x="1436" y="125" width="70" height="21"/><rect x="1548" y="125" width="62" height="21"/><rect x="1676" y="125" width="58" height="21"/><rect x="2002" y="125" width="62" height="21"/><rect x="2114" y="125" width="64" height="21"/></g>

<!-- bottom ruler -->
<rect x="0" y="1600" width="2846" height="44" fill="#333"/>
<path stroke="#7e7e7e" stroke-width="1.5" d="M38 1600v4M75 1600v4M113 1600v4M148 1600v4M187 1600v4M261 1600v4M298 1600v4M335 1600v4M373 1600v4M409 1600v4M483 1600v4M520 1600v4M559 1600v4M594 1600v4M633 1600v4M707 1600v4M743 1600v4M781 1600v4M818 1600v4M855 1600v4M930 1600v4M967 1600v4M1004 1600v4M1041 1600v4M1078 1600v4M1152 1600v4M1190 1600v4M1226 1600v4M1263 1600v4M1300 1600v4M1375 1600v4M1412 1600v4M1449 1600v4M1486 1600v4M1523 1600v4M1598 1600v4M1635 1600v4M1672 1600v4M1709 1600v4M1746 1600v4M1820 1600v4M1858 1600v4M1895 1600v4M1932 1600v4M1969 1600v4M2043 1600v4M2080 1600v4M2118 1600v4M2155 1600v4M2192 1600v4M2266 1600v4M2303 1600v4M2340 1600v4M2377 1600v4M2414 1600v4M2489 1600v4M2526 1600v4M2563 1600v4"/>
<path fill="none" stroke="#7e7e7e" stroke-width="2" d="M224 1600V1616h3M446 1600V1616h3M668 1600V1616h3M892 1600V1616h3M1114 1600V1616h3M1339 1600V1616h3M1561 1600V1616h3M1783 1600V1616h3M2007 1600V1616h3M2229 1600V1616h3M2453 1600V1616h3"/>
<g class="t"><text x="6" y="1623">0:00</text><text x="229" y="1623">0:30</text><text x="452" y="1623">1:00</text><text x="674" y="1623">1:30</text><text x="898" y="1623">2:00</text><text x="1120" y="1623">2:30</text><text x="1345" y="1623">3:00</text><text x="1567" y="1623">3:30</text><text x="1789" y="1623">4:00</text><text x="2013" y="1623">4:30</text><text x="2235" y="1623">5:00</text><text x="2459" y="1623">5:30</text></g>

<!-- locators lines -->
<rect x="0" y="102" width="2" height="1498" fill="#858585"/>
<path stroke="#8b8b8b" stroke-width="2" d="M227 124V1600M341 124V1600M567 124V1600M681 124V1600M737 124V1600M963 124V1600M1077 124V1600M1189 124V1600M1417 124V1600M1529 124V1600M1657 124V1600M1983 124V1600M2095 124V1600"/>
<rect x="2576" y="102" width="2" height="1498" fill="#999"/>
<g fill="#666" stroke="#808080" stroke-width="1.5"><path d="M2 126L18 135 2 144Z"/><path d="M227 126L244 135 227 144Z"/><path d="M341 126L358 135 341 144Z"/><path d="M567 126L584 135 567 144Z"/><path d="M681 126L698 135 681 144Z"/><path d="M737 126L754 135 737 144Z"/><path d="M963 126L980 135 963 144Z"/><path d="M1077 126L1094 135 1077 144Z"/><path d="M1189 126L1206 135 1189 144Z"/><path d="M1417 126L1434 135 1417 144Z"/><path d="M1529 126L1546 135 1529 144Z"/><path d="M1657 126L1674 135 1657 144Z"/><path d="M1983 126L2000 135 1983 144Z"/><path d="M2095 126L2112 135 2095 144Z"/><path d="M2578 125L2588 135 2578 144Z"/></g>
<g class="lo"><text x="24" y="142" textLength="47" lengthAdjust="spacingAndGlyphs">Intro</text><text x="250" y="142">Break</text><text x="364" y="142">Chorus</text><text x="590" y="142" textLength="63" lengthAdjust="spacingAndGlyphs">Bridge</text><text x="704" y="142">B..</text><text x="760" y="142">Chorus</text><text x="986" y="142" textLength="63" lengthAdjust="spacingAndGlyphs">Bridge</text><text x="1100" y="142">Break</text><text x="1212" y="142">Chorus</text><text x="1440" y="142" textLength="63" lengthAdjust="spacingAndGlyphs">Bridge</text><text x="1552" y="142">Break</text><text x="1680" y="142" textLength="50" lengthAdjust="spacingAndGlyphs">Drop</text><text x="2006" y="142">Break</text><text x="2118" y="142" textLength="56" lengthAdjust="spacingAndGlyphs">Outro</text></g>

<!-- playhead -->
<rect x="0" y="1562" width="2" height="34" fill="#52bfd1"/><path d="M0 1602L8 1611H0Z" fill="#52bfd1"/>
<text x="2528" y="1588" font-size="34" font-weight="bold" fill="#7a7a7a" textLength="54" lengthAdjust="spacingAndGlyphs">2/1</text>

<!-- right column -->
<rect x="2588" y="146" width="258" height="1454" fill="#222"/>
<rect x="2802" y="150" width="44" height="1446" fill="#333"/>
<rect x="2802" y="1546" width="44" height="10" fill="#363636"/>
<rect x="2592" y="1546" width="206" height="10" fill="#363636"/>
<g class="s"><rect x="2802" y="218" width="44" height="4"/><rect x="2802" y="290" width="44" height="4"/><rect x="2802" y="432" width="44" height="4"/><rect x="2802" y="540" width="44" height="4"/><rect x="2802" y="682" width="44" height="4"/><rect x="2802" y="824" width="44" height="4"/><rect x="2802" y="862" width="44" height="4"/><rect x="2802" y="936" width="44" height="4"/><rect x="2802" y="1010" width="44" height="4"/><rect x="2802" y="1152" width="44" height="4"/><rect x="2802" y="1328" width="44" height="4"/><rect x="2802" y="1470" width="44" height="4"/><rect x="2802" y="1542" width="44" height="4"/><rect x="2802" y="1556" width="44" height="6"/></g>
<rect x="2802" y="1562" width="44" height="34" fill="#444"/>
<g fill="#1a1a1a"><path d="M2810 154h14v6h-14zM2810 162h14V214h-14zM2810 226h14v6h-14zM2810 234h14V286h-14zM2810 298h14v6h-14zM2810 306h14V428h-14zM2810 440h14v6h-14zM2810 448h14V536h-14zM2810 548h14v6h-14zM2810 556h14V678h-14zM2810 690h14v6h-14zM2810 698h14V820h-14zM2810 832h14v4h-14zM2810 838h14V858h-14zM2810 870h14v6h-14zM2810 878h14V932h-14zM2810 944h14v6h-14zM2810 952h14V1006h-14zM2810 1018h14v6h-14zM2810 1026h14V1148h-14zM2810 1160h14v6h-14zM2810 1168h14V1324h-14zM2810 1336h14v6h-14zM2810 1344h14V1466h-14zM2810 1478h14v6h-14zM2810 1486h14V1538h-14zM2810 1566h14v3h-14zM2810 1571h14V1592h-14z"/></g>
<path d="M2817 154V1592" stroke="#333" stroke-width="2"/>

<!-- header rows -->
<g fill="#d0d0d0"><rect x="2592" y="150" width="206" height="68"/><rect x="2592" y="222" width="206" height="68"/><rect x="2592" y="436" width="206" height="104"/><rect x="2592" y="540" width="8" height="930"/><rect x="2592" y="1474" width="206" height="68"/></g>
<rect x="2600" y="540" width="198" height="4" fill="#222"/>
<rect x="2600" y="544" width="2" height="926" fill="#222"/>
<g fill="#578de0"><rect x="2592" y="294" width="206" height="138"/><rect x="2602" y="544" width="196" height="138"/><rect x="2602" y="686" width="196" height="138"/><rect x="2602" y="828" width="196" height="34"/><rect x="2602" y="866" width="196" height="70"/><rect x="2602" y="940" width="196" height="70"/><rect x="2602" y="1014" width="196" height="138"/><rect x="2602" y="1156" width="196" height="172"/><rect x="2602" y="1332" width="196" height="138"/></g>
<rect x="2592" y="1562" width="206" height="34" fill="#b7dde9"/>

<!-- icons dark -->
<g fill="none" stroke="#333" stroke-width="2">
<circle cx="2609" cy="167" r="12.5"/><circle cx="2609" cy="239" r="12.5"/><circle cx="2609" cy="453" r="12.5"/><circle cx="2609" cy="1491" r="12.5"/>
<path stroke-width="2" d="M2601 161h16M2601 167h16M2601 173h16M2601 233h16M2601 239h16M2601 245h16M2601 1485h16M2601 1491h16M2601 1497h16M2600 447h15M2604 453h13M2606 459h11"/>
</g>
<!-- icons blue -->
<g fill="none" stroke="#aabbd6" stroke-width="2"><circle cx="2609" cy="311" r="12.5"/><circle cx="2619" cy="561" r="12.5"/><circle cx="2619" cy="703" r="12.5"/><circle cx="2619" cy="845" r="12.5"/><circle cx="2619" cy="883" r="12.5"/><circle cx="2619" cy="957" r="12.5"/><circle cx="2619" cy="1031" r="12.5"/><circle cx="2619" cy="1173" r="12.5"/><circle cx="2619" cy="1349" r="12.5"/></g>
<path fill="#aabbd6" d="M2603 307h12l-6 10zM2613 557h12l-6 10zM2613 699h12l-6 10zM2616 839l9 6-9 6zM2613 879h12l-6 10zM2613 953h12l-6 10zM2613 1027h12l-6 10zM2613 1169h12l-6 10zM2613 1345h12l-6 10z"/>
<g class="hd"><text x="2629" y="174">1 Vocal</text><text x="2629" y="246">5 Drums</text><text x="2629" y="460">17 Harmoni</text><text x="2629" y="1498">26 Fx</text></g>
<g class="hb"><text x="2631" y="318">16 Bass</text><text x="2638" y="568">18 Acid</text><text x="2638" y="710">19 Noise</text><text x="2638" y="852">20 Fx</text><text x="2638" y="890">21 Guitar</text><text x="2638" y="964">22 Piano</text><text x="2638" y="1038">23 Piano</text><text x="2638" y="1180">24 Synth</text><text x="2638" y="1356">25 Pluck</text></g>
<circle cx="2609" cy="1579" r="12.5" fill="none" stroke="#111" stroke-width="2"/><path d="M2606 1572l9 7-9 7z" fill="#111"/>
<text x="2633" y="1586" font-size="20" font-weight="bold" fill="#111">Main</text>

<!-- top right buttons -->
<rect x="2599" y="77" width="56" height="25" rx="12.5" fill="#222" stroke="#151515" stroke-width="2"/>
<text x="2612" y="96" font-size="20" fill="#a8a8a8">Del</text>
<rect x="2679" y="77" width="45" height="25" fill="#222" stroke="#151515" stroke-width="2"/>
<rect x="2733" y="77" width="45" height="25" fill="#222" stroke="#151515" stroke-width="2"/>
<path d="M2696 94L2705 85" stroke="#bbb" stroke-width="2.5"/><circle cx="2696" cy="94" r="3" fill="#bbb"/><circle cx="2705" cy="85" r="3" fill="#bbb"/>
<path d="M2748 88h14v8h-14z" fill="#bbb"/><path d="M2751 88v-2a4 4 0 0 1 8 0v2" fill="none" stroke="#bbb" stroke-width="2"/>
<circle cx="2611" cy="125" r="12" fill="#222" stroke="#171717" stroke-width="2"/><circle cx="2643" cy="125" r="12" fill="#222" stroke="#171717" stroke-width="2"/>
<path d="M2618 125h-11M2611 120l-6 5 6 5" fill="none" stroke="#6a6a6a" stroke-width="2.5"/>
<path d="M2636 125h12M2644 120l6 5-6 5" fill="none" stroke="#ddd" stroke-width="2.5"/>

<!-- bottom right controls -->
<rect x="2593" y="1609" width="28" height="24" fill="#f4b468" stroke="#222" stroke-width="2"/>
<path stroke="#222" stroke-width="2" d="M2599 1617v8M2603 1614v14M2607 1611v21M2611 1615v12M2615 1618v6"/>
<rect x="2629" y="1609" width="68" height="24" fill="#232323" stroke="#171717" stroke-width="2"/>
<rect x="2630" y="1610" width="20" height="22" fill="#33778f"/>
<text x="2636" y="1629" font-size="21" fill="#a8a8a8">1.00x</text>
<rect x="2731" y="1609" width="29" height="24" fill="#232323" stroke="#171717" stroke-width="2"/>
<rect x="2767" y="1609" width="29" height="24" fill="#232323" stroke="#171717" stroke-width="2"/>
<text x="2738" y="1628" font-size="19" fill="#aaa">H</text><text x="2773" y="1628" font-size="19" fill="#aaa">W</text>

<!-- window frame -->
<rect x="1" y="7" width="2846" height="1636" rx="10" fill="none" stroke="#777" stroke-width="2"/>
</svg>
</body></html>
